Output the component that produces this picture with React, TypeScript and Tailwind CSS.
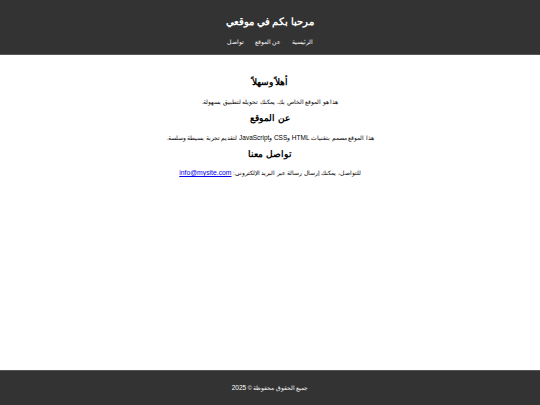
import React from 'react';

const App: React.FC = () => {
  return (
    <div dir="rtl" className="min-h-screen flex flex-col bg-white text-black" style={{ fontFamily: '"Liberation Sans", Arial, sans-serif' }}>
      <header className="bg-[#333333] text-white text-center h-[55px] border-b border-[#555555] flex flex-col items-center">
        <h1 className="text-[10px] font-bold mt-[15px] leading-[14px]">مرحبا بكم في موقعي</h1>
        <nav className="flex justify-center gap-[11px] text-[5.5px] mt-[9px] leading-[8px]">
          <a href="#">الرئيسية</a>
          <a href="#">عن الموقع</a>
          <a href="#">تواصل</a>
        </nav>
      </header>

      <main className="flex-1 flex flex-col items-center text-center pt-[21px]">
        <section className="flex flex-col items-center">
          <h2 className="text-[8.8px] font-bold leading-[12px]">أهلاً وسهلاً</h2>
          <p className="text-[5.5px] leading-[8px] mt-[10px] mb-[6px]">هذا هو الموقع الخاص بك. يمكنك تحويله لتطبيق بسهولة.</p>
        </section>
        <section className="flex flex-col items-center">
          <h2 className="text-[8.8px] font-bold leading-[12px]">عن الموقع</h2>
          <p className="text-[5.5px] leading-[8px] mt-[10px] mb-[6px]">
            هذا الموقع مصمم بتقنيات <span className="text-[6.5px]">HTML</span> و<span className="text-[6.5px]">CSS</span> و<span className="text-[6.5px]">JavaScript</span> لتقديم تجربة بسيطة وسلسة.
          </p>
        </section>
        <section className="flex flex-col items-center">
          <h2 className="text-[8.8px] font-bold leading-[12px]">تواصل معنا</h2>
          <p className="text-[5.5px] leading-[8px] mt-[9px]">
            للتواصل، يمكنك إرسال رسالة عبر البريد الإلكتروني:{' '}
            <a href="#" className="text-[6.8px] text-[#0000ee] underline">info@mysite.com</a>
          </p>
        </section>
      </main>

      <footer className="bg-[#333333] text-white text-center h-[35px] border-t border-[#555555] flex items-center justify-center">
        <p className="text-[5.5px]">جميع الحقوق محفوظة © <span className="text-[6.5px]">2025</span></p>
      </footer>
    </div>
  );
};

export default App;
